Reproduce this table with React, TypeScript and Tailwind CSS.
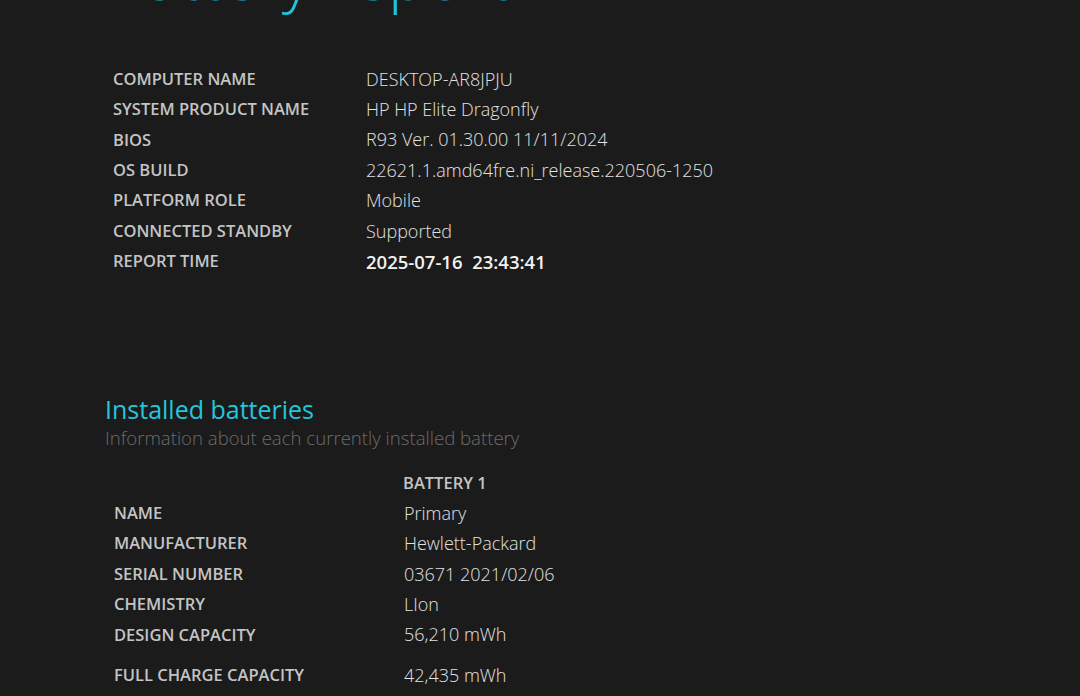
const systemInfo = [
  { label: 'Computer name', value: 'DESKTOP-AR8JPJU' },
  { label: 'System product name', value: 'HP HP Elite Dragonfly' },
  { label: 'BIOS', value: 'R93 Ver. 01.30.00 11/11/2024' },
  { label: 'OS build', value: '22621.1.amd64fre.ni_release.220506-1250' },
  { label: 'Platform role', value: 'Mobile' },
  { label: 'Connected standby', value: 'Supported' },
]

const batteryInfo = [
  { label: 'Name', value: 'Primary' },
  { label: 'Manufacturer', value: 'Hewlett-Packard' },
  { label: 'Serial number', value: '03671 2021/02/06' },
  { label: 'Chemistry', value: 'LIon' },
  { label: 'Design capacity', value: '56,210 mWh' },
]

function Row({ label, value, labelWidth, strong }: { label: string; value: string; labelWidth: string; strong?: boolean }) {
  return (
    <div className="flex h-[30.4px] items-center">
      <div className={`${labelWidth} shrink-0 text-[16.5px] font-semibold uppercase text-[#c4c4c4]`}>{label}</div>
      <div
        className={
          strong
            ? 'whitespace-pre text-[18.5px] font-semibold text-[#f2f2f2]'
            : 'whitespace-pre text-[18px] font-light text-[#e2e2e2]'
        }
      >
        {value}
      </div>
    </div>
  )
}

export default function App() {
  return (
    <div className="h-[696px] overflow-hidden bg-[#1b1b1b] pl-[105px] font-['Open_Sans',sans-serif]">
      <h1 className="-mt-[56px] text-[64px] font-light leading-none text-[#1fc2d9]">Battery report</h1>

      {/* System info */}
      <div className="mt-[56px] pl-[8px]">
        {systemInfo.map((row) => (
          <Row key={row.label} label={row.label} value={row.value} labelWidth="w-[253px]" />
        ))}
        <Row label="Report time" value="2025-07-16  23:43:41" labelWidth="w-[253px]" strong />
      </div>

      {/* Installed batteries */}
      <h2 className="mt-[117px] text-[25px] leading-[30px] text-[#24c6dc]">Installed batteries</h2>
      <p className="mt-[2px] text-[18.6px] font-light leading-[24px] text-[#6c6c6c]">
        Information about each currently installed battery
      </p>

      <div className="mt-[18px] pl-[9px]">
        <div className="flex h-[30.4px] items-center">
          <div className="w-[289px] shrink-0" />
          <div className="text-[16.5px] font-semibold uppercase text-[#c4c4c4]">Battery 1</div>
        </div>
        {batteryInfo.map((row) => (
          <Row key={row.label} label={row.label} value={row.value} labelWidth="w-[290px]" />
        ))}
        <div className="mt-[10px]">
          <Row label="Full charge capacity" value="42,435 mWh" labelWidth="w-[290px]" />
        </div>
      </div>
    </div>
  )
}
